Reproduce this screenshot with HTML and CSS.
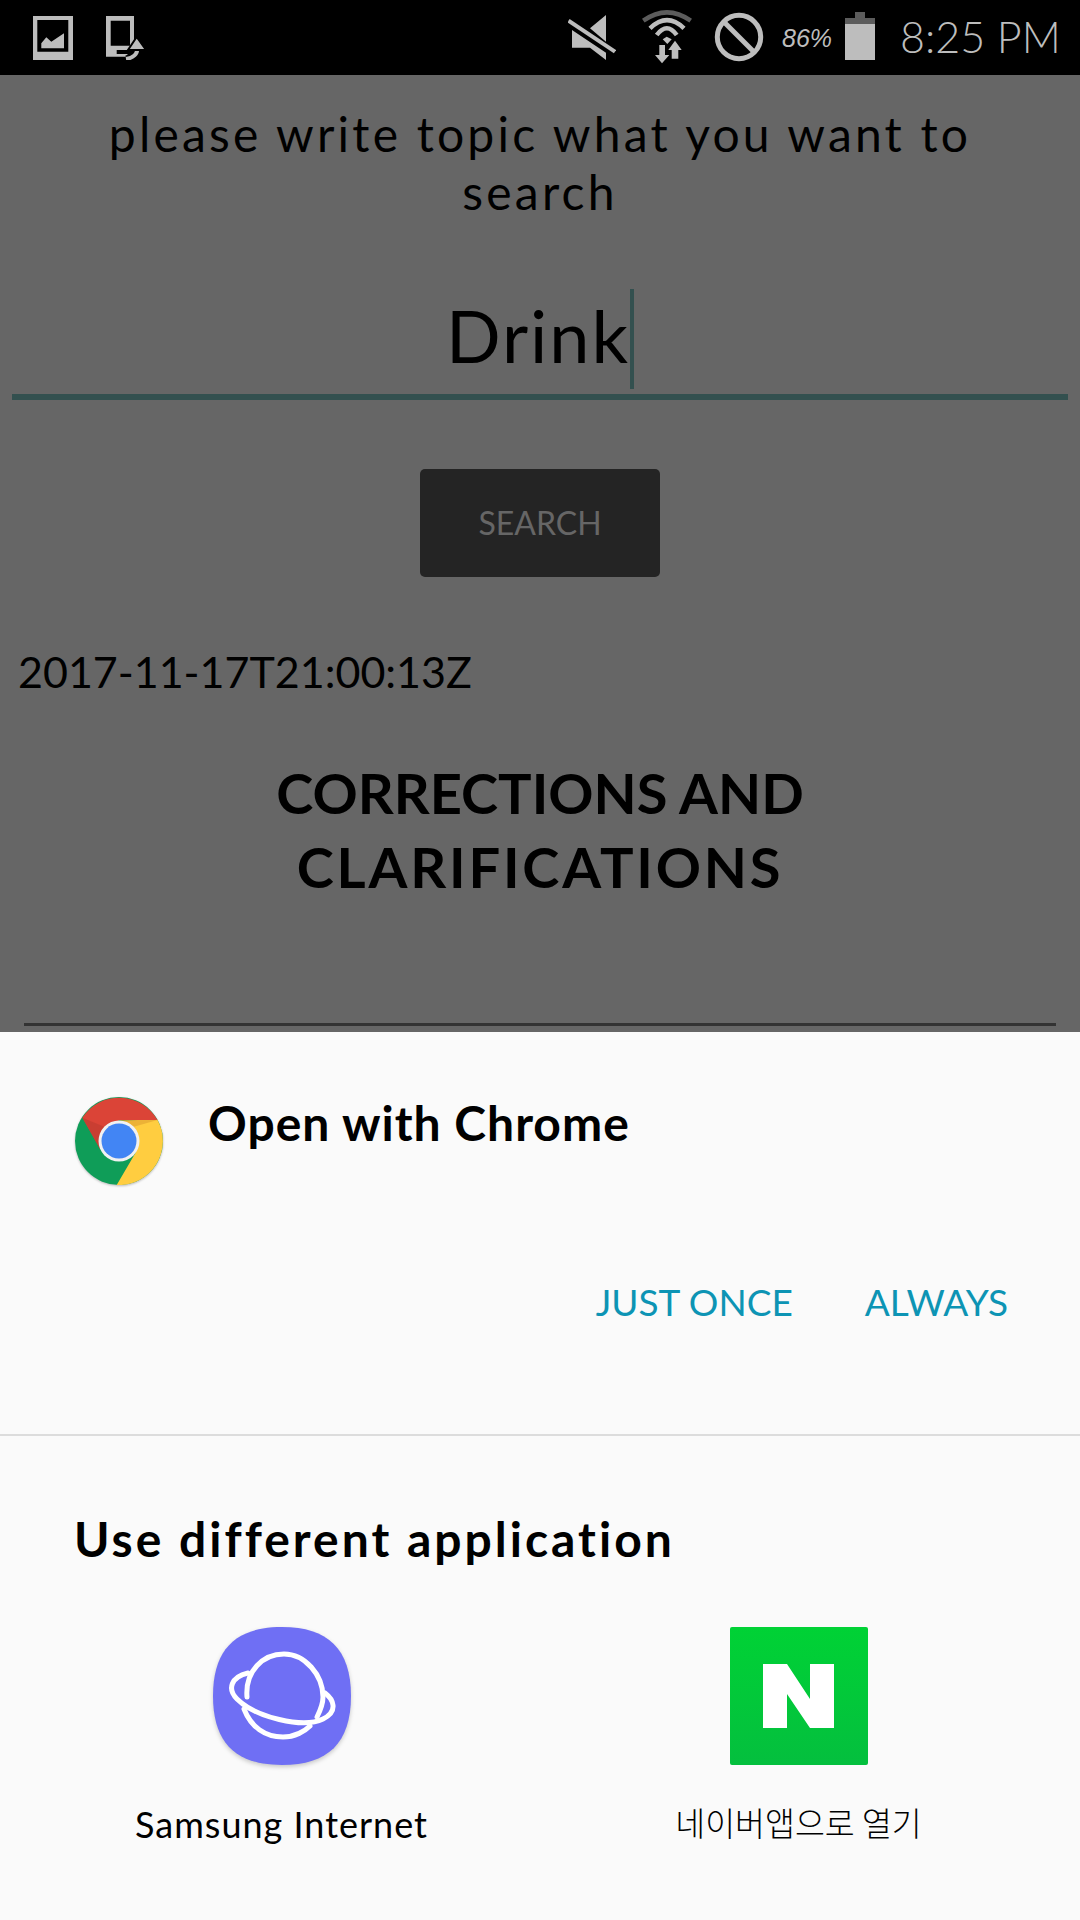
FILE: index.html
```html
<!DOCTYPE html>
<html lang="en">
<head>
<meta charset="utf-8">
<title>Open with</title>
<link rel="stylesheet" href="styles.css">
</head>
<body>
<div class="screen">
  <header class="status">
    <div class="status-left">
      <svg class="ic-gallery" viewBox="0 0 40 44"><path fill="#bdbdbd" fill-rule="evenodd" d="M0 0H40V44H0ZM4.300 4V35.700H35.300V4Z"/><path fill="#bdbdbd" d="M8.300 32.300V27.300L13.300 21.300 18.300 25.700 31 17.300V32.300Z"/></svg>
      <svg class="ic-rotate" viewBox="0 0 40 44"><path fill="#bdbdbd" d="M0 0H28V28L20 40.700H0Z"/><path fill="#000" d="M4.700 4.700H24V29.700H4.700ZM10.700 34H24V38H10.700Z"/><path fill="none" stroke="#000" stroke-width="7" d="M31 32C32 38 27 42 20 43"/><path fill="none" stroke="#bdbdbd" stroke-width="4" d="M31 32C32 38 27 42 20 43"/><path fill="#bdbdbd" stroke="#000" stroke-width="2" d="M30.700 21L40 34H22Z"/></svg>
    </div>
    <div class="status-right">
      <svg class="ic-mute" viewBox="0 0 48 48"><path fill="#bdbdbd" d="M22 14.300L38 1V27.700ZM4 16V33.700H22L38 46V38.700Z"/><path stroke="#bdbdbd" stroke-width="4" fill="none" d="M0.500 6.700L47 37.700"/></svg>
      <svg class="ic-wifi" viewBox="0 0 56 56"><path fill="none" stroke="#5c5c5c" stroke-width="4.500" d="M3.300 12.700Q27 -4 50.700 12.700"/><path fill="none" stroke="#bdbdbd" stroke-width="4.500" d="M10 20.300Q27 4 44 20.300M16.700 27Q27 13.500 36.700 27"/><path fill="#bdbdbd" d="M22.700 31.300L26.700 28.700 31.700 31.300 27.300 36ZM19.300 37H25V47H29.300L22 55.300 15 47H19.300ZM35 32.700L41.700 42H38.300V50.700H31.700V42H28.300Z"/></svg>
      <svg class="ic-block" viewBox="0 0 50 50"><circle cx="25" cy="25" r="21.700" fill="none" stroke="#bdbdbd" stroke-width="5"/><path stroke="#bdbdbd" stroke-width="5" d="M10 10L40 40"/></svg>
      <span class="pct">86%</span>
      <svg class="ic-battery" viewBox="0 0 30 48"><path fill="#5c5c5c" d="M10 0H20V6H30V12H0V6H10Z"/><path fill="#bdbdbd" d="M0 12H30V48H0Z"/></svg>
      <span class="time">8:25 PM</span>
    </div>
  </header>

  <main class="app">
    <p class="prompt">please write topic what you want to<br>search</p>
    <div class="field"><span class="field-text">Drink</span><span class="caret"></span></div>
    <button class="search" type="button">SEARCH</button>
    <p class="date">2017-11-17T21:00:13Z</p>
    <h1 class="headline">CORRECTIONS AND<br><span class="headline-wide">CLARIFICATIONS</span></h1>
    <div class="rule"></div>
  </main>

  <section class="sheet">
    <div class="preferred">
      <svg class="chrome" viewBox="0 0 88 88">
        <circle cx="44" cy="44" r="44" fill="#0f9d58"/>
        <path fill="#ffcd40" d="M82 22A44 44 0 0 1 41.700 88L61 55 44 24Z"/>
        <path fill="#db4437" d="M7.300 20.800A44 44 0 0 1 82.500 23H44L25 52Z"/>
        <path fill="#b3372c" opacity=".45" d="M7.300 20.800L25 52 30 30Z"/>
        <path fill="#e0a030" opacity=".6" d="M44 23H82.500L58 30Z"/>
        <circle cx="44" cy="44" r="20.500" fill="#f1f1f1"/>
        <circle cx="44" cy="44" r="17.500" fill="#4285f4"/>
      </svg>
      <h2 class="open-title">Open with Chrome</h2>
    </div>
    <div class="actions">
      <span class="action just">JUST ONCE</span>
      <span class="action">ALWAYS</span>
    </div>
    <div class="divider"></div>
    <h2 class="other-title">Use different application</h2>
    <div class="apps">
      <div class="app-item">
        <svg class="app-icon samsung" viewBox="0 0 138 138">
          <path fill="#6f6ff4" d="M69 0C115 0 138 22 138 69S115 138 69 138 0 116 0 69 23 0 69 0Z"/>
          <g fill="none" stroke="#fff" stroke-width="5" stroke-linecap="round">
            <path d="M35 46C18 50 14 62 24 72 42 90 90 102 110 92 126 84 120 72 112 66"/>
            <path d="M34 70C32 44 50 27 71 27 92 27 110 48 110 70 110 76 108 82 104 90"/>
            <path d="M31 82C38 100 52 110 70 110 82 110 92 104 97 99"/>
          </g>
        </svg>
        <span class="app-label">Samsung Internet</span>
      </div>
      <div class="app-item">
        <svg class="app-icon" viewBox="0 0 138 138">
          <defs><linearGradient id="nv" x1="0" y1="0" x2="0" y2="1"><stop offset="0" stop-color="#00d235"/><stop offset="1" stop-color="#04bf3e"/></linearGradient></defs>
          <rect width="138" height="138" rx="2" fill="url(#nv)"/>
          <path fill="#fff" d="M33 37H57L80 72V37H104V101H80L57 67V101H33Z"/>
        </svg>
        <span class="app-label ko">네이버앱으로 열기</span>
      </div>
    </div>
  </section>
</div>
</body>
</html>
```
FILE: styles.css
```css
* { box-sizing: border-box; }
html, body { margin: 0; padding: 0; }
body { width: 1080px; height: 1920px; overflow: hidden; font-family: "Lato", "Noto Sans CJK KR", sans-serif; color: #000; }
p, h1, h2 { margin: 0; font-weight: 400; }
.screen { display: flex; flex-direction: column; width: 1080px; height: 1920px; background: #666; }

.status { flex: 0 0 75px; height: 75px; background: #000; color: #bdbdbd; display: flex; justify-content: space-between; align-items: flex-start; padding: 0 23px 0 33px; }
.status-left { display: flex; gap: 33px; padding-top: 16px; }
.status-right { display: flex; align-items: flex-start; }
.status-left svg { display: block; width: 40px; height: 44px; }
.ic-mute { width: 48px; height: 48px; margin-top: 14px; }
.ic-wifi { width: 56px; height: 56px; margin: 8px 0 0 24px; }
.ic-block { width: 50px; height: 50px; margin: 12px 0 0 18px; }
.pct { width: 53px; margin: 22px 0 0 18px; font-size: 25px; line-height: 32px; font-family: "Liberation Sans", sans-serif; font-style: italic; white-space: nowrap; }
.ic-battery { width: 30px; height: 48px; margin: 12px 0 0 10px; }
.time { width: 157px; margin: 13px 0 0 25px; font-size: 43px; line-height: 48px; font-weight: 300; white-space: nowrap; }

.app { flex: 0 0 957px; height: 957px; overflow: hidden; display: flex; flex-direction: column; align-items: center; padding: 30px 12px 0; }
.prompt { font-size: 48px; line-height: 58px; letter-spacing: 3.2px; text-align: center; white-space: nowrap; }
.field { flex: none; width: 100%; height: 111px; margin-top: 68px; border-bottom: 6px solid #33504f; display: flex; justify-content: center; align-items: flex-start; }
.field-text { font-size: 72px; line-height: 100px; letter-spacing: 2px; margin-top: -4px; }
.caret { width: 4px; height: 100px; background: #33504f; }
.search { flex: none; width: 240px; height: 108px; margin-top: 69px; padding: 0; border: 0; border-radius: 5px; background: #242424; color: #666; font: 400 32px/1 "Lato", sans-serif; }
.date { align-self: flex-start; margin: 70px 0 0 6px; font-size: 43px; line-height: 50px; white-space: nowrap; }
.headline { margin-top: 59px; font-size: 56px; line-height: 74px; font-weight: 700; text-align: center; }
.headline-wide { letter-spacing: 2.8px; }
.rule { width: 1032px; height: 3px; margin-top: 119px; background: #333; flex: none; }

.sheet { flex: 1; background: #fafafa; }
.preferred { display: flex; align-items: flex-start; padding: 65px 0 0 75px; height: 221px; }
.chrome { width: 88px; height: 88px; filter: drop-shadow(0 1px 1px rgba(0,0,0,.25)); flex: none; }
.open-title { margin: -2px 0 0 45px; font-size: 48px; line-height: 56px; letter-spacing: 1px; font-weight: 700; }
.actions { display: flex; justify-content: flex-end; padding: 24px 72px 0 0; height: 181px; color: #0d94b4; font-size: 37px; line-height: 50px; }
.action { white-space: nowrap; }
.just { margin-right: 72px; }
.divider { height: 2px; background: #dcdcdc; }
.other-title { padding: 75px 0 0 74px; font-size: 48px; line-height: 56px; letter-spacing: 3px; font-weight: 700; }
.apps { display: grid; grid-template-columns: 517px 517px; padding: 60px 0 0 23px; }
.app-item { display: flex; flex-direction: column; align-items: center; }
.app-icon { display: block; width: 138px; height: 138px; }
.samsung { filter: drop-shadow(0 2px 2px rgba(0,0,0,.2)); }
.app-label { margin-top: 39px; font-size: 36px; line-height: 40px; letter-spacing: 1px; white-space: nowrap; }
.ko { margin-top: 37px; font-family: "Noto Sans CJK KR", sans-serif; font-size: 32.5px; font-weight: 300; letter-spacing: 0; }
```
